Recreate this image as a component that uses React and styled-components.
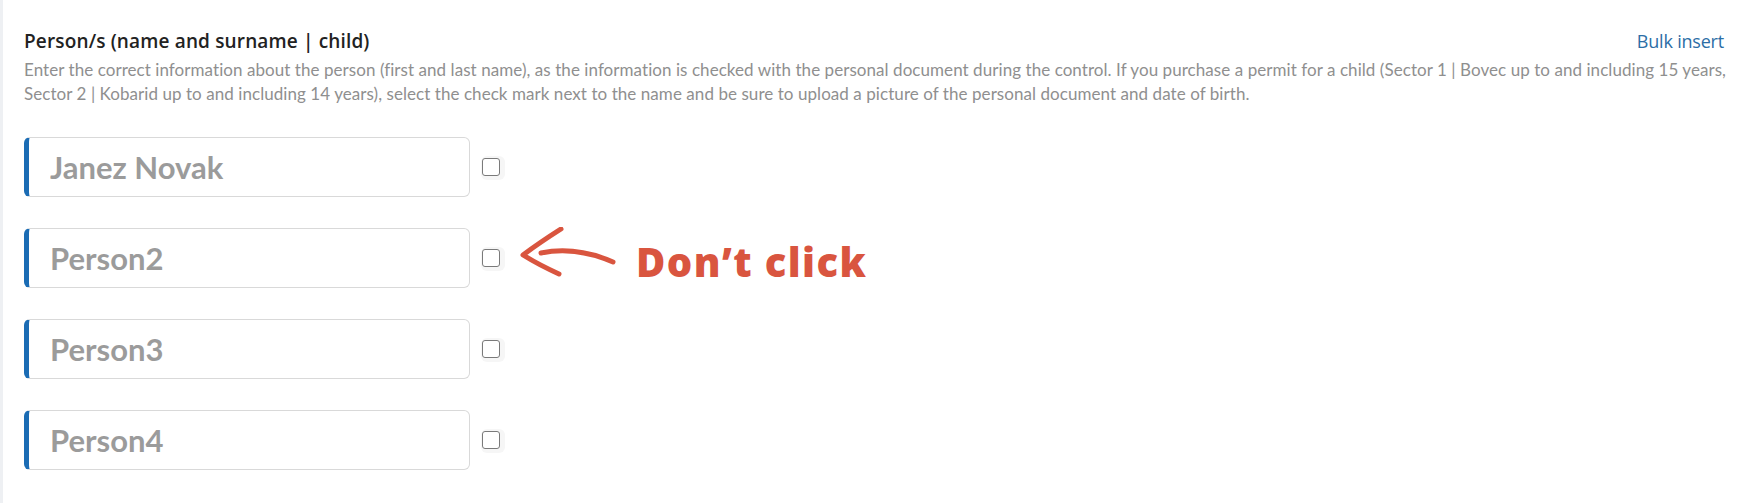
import React from 'react';
import styled, {createGlobalStyle} from 'styled-components';

const GlobalStyle = createGlobalStyle`
  html, body {
    margin: 0;
    padding: 0;
    background: #fff;
  }
  body {
    font-family: "Lato", "Liberation Sans", sans-serif;
  }
`

const Panel = styled.div`
  min-height: 503px;
  box-sizing: border-box;
  border-left: 3px solid #eef0f3;
  padding: 29px 29px 0 21px;
`

const HeadRow = styled.div`
  display: flex;
  justify-content: space-between;
  align-items: baseline;
`

const Title = styled.h3`
  margin: 0;
  font-family: "Open Sans", "Lato", sans-serif;
  font-size: 19px;
  line-height: 25px;
  font-weight: 600;
  letter-spacing: 0.15px;
  color: #222;
`

const BulkLink = styled.a`
  font-family: "Open Sans", "Lato", sans-serif;
  font-size: 18px;
  line-height: 25px;
  letter-spacing: -0.2px;
  color: #2c6ea6;
  text-decoration: none;
  cursor: pointer;
`

const Help = styled.p`
  margin: 4px 0 0;
  font-size: 17px;
  line-height: 24px;
  letter-spacing: 0.06px;
  color: #8f8f8f;
  white-space: nowrap;
`

const PersonList = styled.div`
  display: flex;
  flex-direction: column;
  gap: 31px;
  margin-top: 31px;
`

const Row = styled.div`
  display: flex;
  align-items: center;
`

const NameInput = styled.input`
  box-sizing: border-box;
  width: 446px;
  height: 60px;
  padding: 0 0 0 21px;
  border: 1px solid #d9d9d9;
  border-left: 5px solid #1b6cb4;
  border-radius: 6px;
  font-family: "Lato", "Liberation Sans", sans-serif;
  font-size: 31px;
  font-weight: 700;
  color: #555;
  outline: none;

  &::placeholder {
    color: #9b9b9b;
  }
`

const Check = styled.input`
  appearance: none;
  box-sizing: border-box;
  width: 18px;
  height: 18px;
  margin: 0 0 0 12px;
  border: 1.5px solid #7a7a7a;
  border-radius: 3px;
  background: #fff;
  box-shadow: 2px 1px 0 3px #f6f6f6;
`

const Note = styled.div`
  display: flex;
  align-items: center;
  margin-left: 20px;
  gap: 20px;
`

const ArrowBox = styled.svg`
  margin-top: -12px;
`

const NoteText = styled.span`
  font-family: "Open Sans", "DejaVu Sans", sans-serif;
  font-size: 40px;
  font-weight: 800;
  letter-spacing: 1.4px;
  color: #d9553f;
  line-height: 1;
  margin-top: 7px;
`

const Arrow = () => (
  <ArrowBox width="96" height="50" viewBox="0 0 96 50" fill="none">
    <path d="M21 26 Q56 19 93 35" stroke="#d9553f" strokeWidth="5" strokeLinecap="round" />
    <path d="M41 2 Q19 16 3 28 Q19 38 39 47" stroke="#d9553f" strokeWidth="5" strokeLinecap="round" strokeLinejoin="round" />
  </ArrowBox>
)

const people = ['Janez Novak', 'Person2', 'Person3', 'Person4'];

export default function App() {
  return (
    <Panel>
      <GlobalStyle />
      <HeadRow>
        <Title>Person/s (name and surname | child)</Title>
        <BulkLink>Bulk insert</BulkLink>
      </HeadRow>
      <Help>
        Enter the correct information about the person (first and last name), as the information is checked with the personal document during the control. If you purchase a permit for a child (Sector 1 | Bovec up to and including 15 years,
        <br />
        Sector 2 | Kobarid up to and including 14 years), select the check mark next to the name and be sure to upload a picture of the personal document and date of birth.
      </Help>
      <PersonList>
        {people.map((name, i) => (
          <Row key={name}>
            <NameInput placeholder={name} />
            <Check type="checkbox" />
            {i === 1 && (
              <Note>
                <Arrow />
                <NoteText>Don’t click</NoteText>
              </Note>
            )}
          </Row>
        ))}
      </PersonList>
    </Panel>
  );
}
